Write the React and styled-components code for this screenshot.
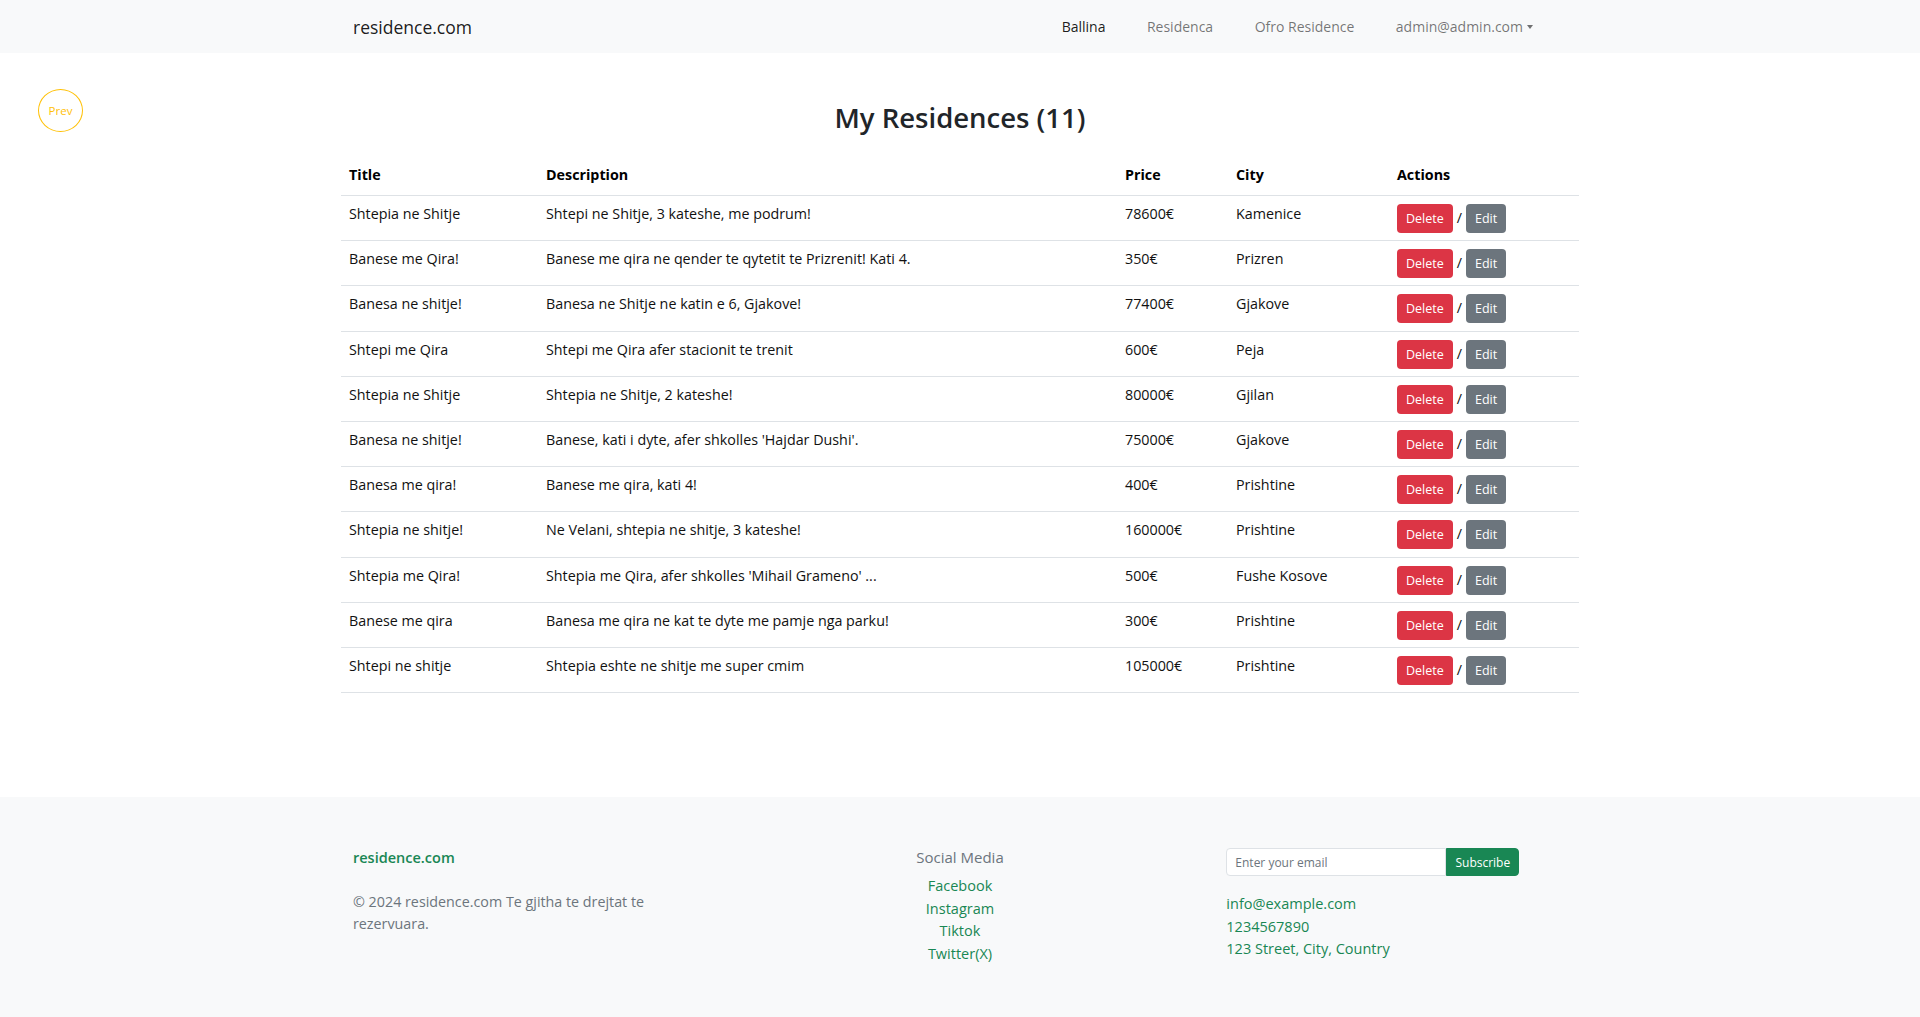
import React from 'react'
import styled, { createGlobalStyle } from 'styled-components'

const residences = [
    { title: 'Shtepia ne Shitje', description: 'Shtepi ne Shitje, 3 kateshe, me podrum!', price: '78600€', city: 'Kamenice' },
    { title: 'Banese me Qira!', description: 'Banese me qira ne qender te qytetit te Prizrenit! Kati 4.', price: '350€', city: 'Prizren' },
    { title: 'Banesa ne shitje!', description: 'Banesa ne Shitje ne katin e 6, Gjakove!', price: '77400€', city: 'Gjakove' },
    { title: 'Shtepi me Qira', description: 'Shtepi me Qira afer stacionit te trenit', price: '600€', city: 'Peja' },
    { title: 'Shtepia ne Shitje', description: 'Shtepia ne Shitje, 2 kateshe!', price: '80000€', city: 'Gjilan' },
    { title: 'Banesa ne shitje!', description: "Banese, kati i dyte, afer shkolles 'Hajdar Dushi'.", price: '75000€', city: 'Gjakove' },
    { title: 'Banesa me qira!', description: 'Banese me qira, kati 4!', price: '400€', city: 'Prishtine' },
    { title: 'Shtepia ne shitje!', description: 'Ne Velani, shtepia ne shitje, 3 kateshe!', price: '160000€', city: 'Prishtine' },
    { title: 'Shtepia me Qira!', description: "Shtepia me Qira, afer shkolles 'Mihail Grameno' ...", price: '500€', city: 'Fushe Kosove' },
    { title: 'Banese me qira', description: 'Banesa me qira ne kat te dyte me pamje nga parku!', price: '300€', city: 'Prishtine' },
    { title: 'Shtepi ne shitje', description: 'Shtepia eshte ne shitje me super cmim', price: '105000€', city: 'Prishtine' },
]

const navLinks = [
    { label: 'Ballina', active: true },
    { label: 'Residenca' },
    { label: 'Ofro Residence' },
]

const socials = ['Facebook', 'Instagram', 'Tiktok', 'Twitter(X)']

const App = () => {
    return (
        <>
            <GlobalStyle />
            <Navbar>
                <NavContainer>
                    <Brand href="#">residence.com</Brand>
                    <NavList>
                        {navLinks.map((link) => (
                            <NavLink key={link.label} href="#" $active={link.active}>{link.label}</NavLink>
                        ))}
                        <NavLink href="#">
                            admin@admin.com<Caret />
                        </NavLink>
                    </NavList>
                </NavContainer>
            </Navbar>

            <Main>
                <TopRow>
                    <PrevButton>Prev</PrevButton>
                    <Heading>My Residences ({residences.length})</Heading>
                </TopRow>

                <TableWrap>
                    <Table>
                        <colgroup>
                            <col style={{ width: 197 }} />
                            <col style={{ width: 579 }} />
                            <col style={{ width: 111 }} />
                            <col style={{ width: 161 }} />
                            <col />
                        </colgroup>
                        <thead>
                            <tr>
                                <Th>Title</Th>
                                <Th>Description</Th>
                                <Th>Price</Th>
                                <Th>City</Th>
                                <Th>Actions</Th>
                            </tr>
                        </thead>
                        <tbody>
                            {residences.map((r, i) => (
                                <tr key={i}>
                                    <Td>{r.title}</Td>
                                    <Td>{r.description}</Td>
                                    <Td>{r.price}</Td>
                                    <Td>{r.city}</Td>
                                    <Td>
                                        <SmallButton $variant="danger">Delete</SmallButton>
                                        <Slash>/</Slash>
                                        <SmallButton $variant="secondary">Edit</SmallButton>
                                    </Td>
                                </tr>
                            ))}
                        </tbody>
                    </Table>
                </TableWrap>
            </Main>

            <Footer>
                <FooterGrid>
                    <FooterCol>
                        <FooterBrand>residence.com</FooterBrand>
                        <Copyright>© 2024 residence.com Te gjitha te drejtat te rezervuara.</Copyright>
                    </FooterCol>
                    <SocialCol>
                        <SocialTitle>Social Media</SocialTitle>
                        {socials.map((s) => (
                            <GreenLink key={s} href="#">{s}</GreenLink>
                        ))}
                    </SocialCol>
                    <ContactCol>
                        <InputGroup>
                            <EmailInput placeholder="Enter your email" />
                            <SubscribeButton>Subscribe</SubscribeButton>
                        </InputGroup>
                        <ContactList>
                            <GreenLink href="#">info@example.com</GreenLink>
                            <GreenLink href="#">1234567890</GreenLink>
                            <GreenLink href="#">123 Street, City, Country</GreenLink>
                        </ContactList>
                    </ContactCol>
                </FooterGrid>
            </Footer>
        </>
    )
}

export default App

const GlobalStyle = createGlobalStyle`
    * { box-sizing: border-box; }
    body {
        margin: 0;
        font-family: "Open Sans", "Noto Sans", sans-serif;
        font-size: 14.3px;
        color: #212529;
        background: #fff;
    }
`

const Navbar = styled.nav`
    background-color: #f8f9fa;
    height: 53px;
    display: flex;
    align-items: center;
`

const NavContainer = styled.div`
    width: 1240px;
    margin: 0 auto;
    padding: 0 47px 0 13px;
    display: flex;
    align-items: center;
`

const Brand = styled.a`
    font-size: 17.5px;
    color: rgba(0, 0, 0, 0.9);
    text-decoration: none;
`

const NavList = styled.div`
    margin-left: auto;
    display: flex;
    align-items: center;
    gap: 41.5px;
`

const NavLink = styled.a`
    font-size: 14px;
    text-decoration: none;
    color: ${(p) => (p.$active ? 'rgba(0,0,0,0.9)' : 'rgba(0,0,0,0.55)')};
    display: flex;
    align-items: center;
`

const Caret = styled.span`
    display: inline-block;
    margin-left: 4px;
    border-top: 4px solid rgba(0, 0, 0, 0.55);
    border-left: 3.5px solid transparent;
    border-right: 3.5px solid transparent;
`

const Main = styled.main`
    padding: 36px 0 104px;
`

const TopRow = styled.div`
    display: grid;
    grid-template-columns: 1fr auto 1fr;
    align-items: start;
`

const PrevButton = styled.button`
    grid-column: 1;
    grid-row: 1;
    justify-self: start;
    margin-left: 38px;
    width: 45px;
    height: 43px;
    border-radius: 50%;
    border: 1px solid #ffc107;
    background: transparent;
    color: #ffc107;
    font-family: inherit;
    font-size: 11.5px;
    padding: 0;
`

const Heading = styled.h2`
    grid-column: 2;
    grid-row: 1;
    margin: 10px 0 18px;
    font-size: 27.5px;
    font-weight: 600;
    line-height: 38px;
    color: #212529;
`

const TableWrap = styled.div`
    width: 1238px;
    margin: 0 auto;
`

const Table = styled.table`
    width: 100%;
    border-collapse: collapse;
    table-layout: fixed;
`

const Th = styled.th`
    text-align: left;
    font-weight: 700;
    padding: 8px;
    line-height: 24px;
    border-bottom: 1px solid #dee2e6;
    color: #000;
`

const Td = styled.td`
    padding: 8px 8px 7px;
    line-height: 20px;
    height: 45.2px;
    vertical-align: top;
    border-bottom: 1px solid #dee2e6;
    color: #111;
    white-space: nowrap;
`

const SmallButton = styled.button`
    font-family: inherit;
    font-size: 12.5px;
    line-height: 19px;
    padding: 4px 8px;
    border: 1px solid transparent;
    border-radius: 4px;
    color: #fff;
    background-color: ${(p) => (p.$variant === 'danger' ? '#dc3545' : '#6c757d')};
`

const Slash = styled.span`
    margin: 0 4px;
`

const Footer = styled.footer`
    background-color: #f8f9fa;
    height: 220px;
    padding-top: 48px;
`

const FooterGrid = styled.div`
    width: 1240px;
    margin: 0 auto;
    padding: 0 13px;
    display: grid;
    grid-template-columns: repeat(3, 1fr);
`

const FooterCol = styled.div`
    display: flex;
    flex-direction: column;
`

const FooterBrand = styled.div`
    color: #198754;
    font-weight: 600;
    font-size: 14.5px;
    line-height: 24px;
    margin-top: 1px;
    margin-bottom: 21px;
`

const Copyright = styled.p`
    margin: 0;
    max-width: 300px;
    color: #6c757d;
    font-size: 14.3px;
    line-height: 22px;
`

const SocialCol = styled.div`
    display: flex;
    flex-direction: column;
    align-items: center;
`

const SocialTitle = styled.div`
    color: #6c757d;
    font-weight: 500;
    font-size: 15px;
    line-height: 24px;
    margin-bottom: 6px;
`

const GreenLink = styled.a`
    color: #198754;
    text-decoration: none;
    font-size: 14.5px;
    line-height: 22.5px;
`

const ContactCol = styled.div`
    padding-left: 64px;
    display: flex;
    flex-direction: column;
    align-items: flex-start;
`

const InputGroup = styled.div`
    display: flex;
    margin-top: 3px;
`

const EmailInput = styled.input`
    width: 220px;
    height: 28px;
    border: 1px solid #dee2e6;
    border-radius: 4px 0 0 4px;
    padding: 4px 8px;
    font-family: inherit;
    font-size: 12px;
    color: #212529;
    background: #fff;
    outline: none;
    &::placeholder { color: #6c757d; }
`

const SubscribeButton = styled.button`
    height: 28px;
    width: 73px;
    border: 1px solid #198754;
    border-radius: 0 4px 4px 0;
    background-color: #198754;
    color: #fff;
    font-family: inherit;
    font-size: 12px;
    padding: 0;
`

const ContactList = styled.div`
    margin-top: 17px;
    display: flex;
    flex-direction: column;
`
